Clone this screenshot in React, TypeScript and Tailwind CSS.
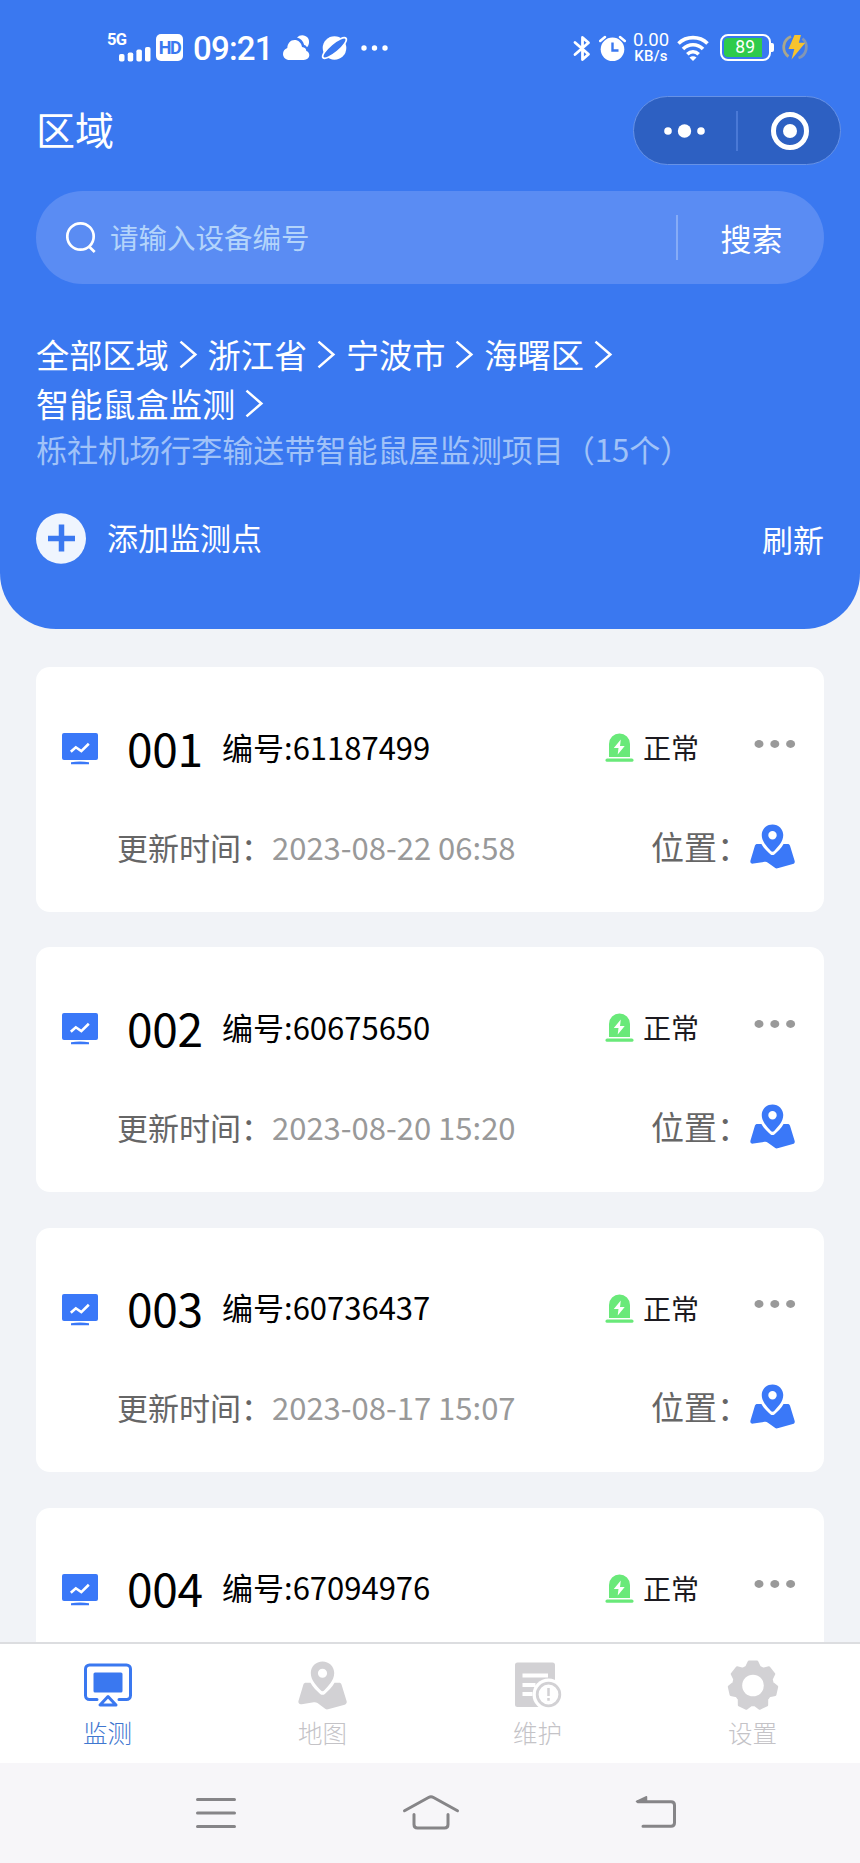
import React from "react";

type Device = { no: string; code: string; time?: string };

const devices: Device[] = [
  { no: "001", code: "61187499", time: "2023-08-22 06:58" },
  { no: "002", code: "60675650", time: "2023-08-20 15:20" },
  { no: "003", code: "60736437", time: "2023-08-17 15:07" },
  { no: "004", code: "67094976" },
];

const crumbs = ["全部区域", "浙江省", "宁波市", "海曙区", "智能鼠盒监测"];

function StatusBar() {
  return (
    <div className="flex h-[96px] items-start pl-[107px] pt-[33px] font-['Roboto',sans-serif]">
      <div className="relative h-[29px] w-[45px]">
        <span className="mt-[-2px] block text-[16.5px] font-bold leading-[17px] tracking-[-0.8px]">5G</span>
        <svg className="absolute left-[12px] top-[12px]" width="33" height="17" viewBox="0 0 33 17" fill="currentColor">
          <rect x="0" y="9" width="5.5" height="7.5" rx="1.8" />
          <rect x="8.7" y="7.5" width="5.5" height="9" rx="1.8" />
          <rect x="17.4" y="4.5" width="5.5" height="12" rx="1.8" />
          <rect x="26" y="2" width="5.5" height="14.5" rx="1.8" />
        </svg>
      </div>
      <div className="ml-[4px] mt-[1px] flex h-[27px] w-[27px] items-center justify-center rounded-[5px] bg-white text-[18px] font-bold leading-none tracking-[-1.5px] text-[#3a78f0]">
        HD
      </div>
      <span className="ml-[10px] mt-[-1px] w-[80px] text-[33px] font-medium leading-[33px] tracking-[-0.8px]">09:21</span>
      <svg className="ml-[10px] mt-[1px]" width="28" height="27" viewBox="0 0 28 27" fill="currentColor">
        <path d="M14 3.600C16.500.300 22 .3 24.800 3.700c2.200 3.300 1.300 7.600-.8 9.600-.6-1.400-1.600-2-2.800-2.300C20.200 7 17.500 4.500 14 3.600Z" />
        <path d="M6.500 26C2.800 26 0 23.400 0 20c0-2.800 1.700-5 4.300-5.900C4.500 9.300 7.500 6 11.500 6c3.800 0 6.900 2.700 7.500 7 3 .4 4.200 1.900 4.300 4 1.800.6 3 2 3 4.100 0 2.800-2.200 4.900-5.500 4.900Z" />
      </svg>
      <svg className="ml-[9px] mt-[1px]" width="30" height="28" viewBox="0 0 30 28">
        <circle cx="14.500" cy="14" r="11.800" fill="currentColor" />
        <ellipse cx="14.500" cy="14" rx="15" ry="4.500" transform="rotate(-40 14.500 14)" fill="#3a78f0" stroke="currentColor" strokeWidth="1.800" />
      </svg>
      <svg className="ml-[11px] mt-[12px]" width="28" height="6" viewBox="0 0 28 6" fill="currentColor">
        <circle cx="3" cy="3" r="2.700" />
        <circle cx="13.500" cy="3" r="2.700" />
        <circle cx="24" cy="3" r="2.700" />
      </svg>
      <div className="ml-[184px] flex items-start">
        <svg className="mt-[2px]" width="18" height="27" viewBox="0 0 18 27" fill="none" stroke="currentColor" strokeWidth="2.800" strokeLinejoin="round" strokeLinecap="round">
          <path d="M2 7.500 15.500 19.200 9.500 24.500V2.500l6 5.300L2 19.500" />
        </svg>
        <svg className="ml-[8px] mt-[2px]" width="27" height="27" viewBox="0 0 27 27">
          <circle cx="13.500" cy="14.300" r="11.800" fill="currentColor" />
          <path d="M1.200 6 6 2M25.800 6 21 2" stroke="currentColor" strokeWidth="2.500" strokeLinecap="round" />
          <path d="M13.500 7.500v8h6" fill="none" stroke="#3a78f0" strokeWidth="2.400" />
        </svg>
        <div className="ml-[6px] mt-[-2px] flex w-[38px] flex-col items-center">
          <span className="text-[18.500px] leading-[18px]">0.00</span>
          <span className="text-[15px] font-medium leading-[15px] tracking-[0.300px]">KB/s</span>
        </div>
        <svg className="ml-[7px] mt-[2px]" width="32" height="26" viewBox="0 0 32 26" fill="none" stroke="currentColor" strokeWidth="3.600">
          <path d="M1.500 8.500C9.500.7 22.500.7 30.500 8.500" />
          <path d="M6 14C11.700 8.300 20.300 8.300 26 14" />
          <path d="M10.300 19.200c3.300-3.200 8.100-3.200 11.400 0" />
          <path d="m12.500 22.500 3.500 3.400 3.500-3.400c-2-1.700-5-1.700-7 0Z" fill="currentColor" stroke="none" />
        </svg>
        <div className="ml-[11px] mt-[1px] flex items-center">
          <div className="flex h-[27px] w-[51px] rounded-[8px] border-2 border-white p-[2px]">
            <div className="flex h-full w-[38px] items-center justify-end rounded-l-[4px] bg-[#2fcb4b] pr-[7px] text-[17.500px] leading-none">
              89
            </div>
          </div>
          <div className="h-[9px] w-[3px] rounded-r-[2px] bg-white" />
        </div>
        <svg className="ml-[8px] mt-[1px]" width="27" height="27" viewBox="0 0 27 27">
          <path d="M9 2.500A11.500 11.500 0 0 0 6.500 22.500" fill="none" stroke="#aaa78c" strokeWidth="2.800" />
          <path d="M20.500 4.500a11.500 11.500 0 0 1-4 19.500" fill="none" stroke="#8296b4" strokeWidth="2.800" />
          <path d="M12.500 1h6.500l-2.200 7.800h6.500L9.500 25.500l2.800-10.500H6.500Z" fill="#f7c32e" />
        </svg>
      </div>
    </div>
  );
}

function TitleBar() {
  return (
    <div className="flex h-[70px] items-start justify-between pl-[36px] pr-[19px]">
      <h1 className="mt-[13px] text-[39px] leading-[39px]">区域</h1>
      <div className="flex h-[69px] w-[208px] items-center rounded-full border-[1.500px] border-[#6792e6] bg-[#2d60c2]">
        <svg className="ml-[28px]" width="44" height="14" viewBox="0 0 44 14" fill="currentColor">
          <circle cx="6" cy="7" r="3.800" />
          <circle cx="22.500" cy="7" r="6.700" />
          <circle cx="39" cy="7" r="3.800" />
        </svg>
        <div className="ml-[30px] h-[40px] w-[1.500px] bg-[#4a79d6]" />
        <svg className="ml-[32px]" width="40" height="40" viewBox="0 0 40 40" fill="none">
          <circle cx="20" cy="20" r="16.500" stroke="currentColor" strokeWidth="5" />
          <circle cx="20" cy="20" r="7" fill="currentColor" />
        </svg>
      </div>
    </div>
  );
}

function SearchBar() {
  return (
    <div className="mx-[36px] mt-[25px] flex h-[93px] items-center rounded-full bg-[#5a8cf3] pl-[30px]">
      <svg width="31" height="33" viewBox="0 0 31 33" fill="none" stroke="currentColor" strokeWidth="2.700">
        <circle cx="14.500" cy="15.500" r="13.200" />
        <path d="m23.500 26 5.200 5" />
      </svg>
      <span className="ml-[13px] text-[28.500px] leading-none text-[#b3d4fb]">请输入设备编号</span>
      <div className="ml-auto h-[45px] w-[2px] bg-[#86acf7]" />
      <button className="w-[146px] pb-[1px] pl-[1px] text-[31px] leading-none">搜索</button>
    </div>
  );
}

function Chevron() {
  return (
    <svg className="mx-[10px] mt-[1px]" width="18.800" height="29" viewBox="0 0 19 29" fill="none" stroke="currentColor" strokeWidth="2.600">
      <path d="M1.500 1.500 16.500 14.500 1.500 27.500" />
    </svg>
  );
}

function MapPin({ size }: { size: number }) {
  return (
    <svg width={size} height={size} viewBox="0 0 46 46" fill="currentColor">
      <path
        fillRule="evenodd"
        d="M23 .5c6.200 0 11 4.800 11 10.800 0 7.200-6 12.500-9.300 16.200-1 1.100-2.400 1.100-3.400 0C18 23.800 12 18.500 12 11.300 12 5.300 16.800.5 23 .5Zm0 6.700a4.300 4.300 0 1 0 0 8.600 4.300 4.300 0 0 0 0-8.600Z"
      />
      <path d="M7.500 20.500h4.200c2.300 4.500 6 7.500 9.100 10.400 1.400 1.200 3 1.200 4.400 0 3.100-2.900 6.800-5.900 9.100-10.400h4.200c1.200 0 2 .6 2.400 1.700l4.700 15.300c.5 1.700-.1 3-1.800 3.500l-15.600 4.300c-1 .3-1.900.1-2.700-.5l-7.200-5.300c-1.100-.8-2.200-1-3.500-.800L3.500 40.500C1.200 41-.1 39.500.5 37.300L5 22.200c.4-1.100 1.300-1.700 2.500-1.700Z" />
    </svg>
  );
}

function DeviceCard({ device }: { device: Device }) {
  return (
    <section className="flex h-[244.500px] shrink-0 flex-col rounded-[14px] bg-white">
      <div className="flex h-[162px] items-center pl-[26px]">
        <svg className="mt-[2px] shrink-0" width="36" height="32" viewBox="0 0 36 32">
          <rect width="36" height="27" rx="2" fill="#3a78f8" />
          <path d="M9 29.300q9-1.800 18 0v1.900H9Z" fill="#3a78f8" />
          <path d="m8.800 18.800 5-4.500 5.500 3.800 7.500-7.400" fill="none" stroke="#fff" strokeWidth="2.600" />
        </svg>
        <span className="mb-[3px] ml-[29px] w-[95px] text-[46px] leading-none tracking-[-0.300px] text-black">{device.no}</span>
        <span className="mb-[4px] text-[31px] leading-none text-black">编号:{device.code}</span>
        <div className="ml-auto flex items-center pr-[28px]">
          <svg width="29" height="30" viewBox="0 0 29 30">
            <path d="M4 24V11a10.500 10.500 0 0 1 21 0v13Z" fill="#69e979" />
            <rect x="0.500" y="25.500" width="28" height="3.300" rx="1.600" fill="#69e979" />
            <path d="M15.800 6.500 8.800 15h4.700l-.8 6.500 7-8.500H15Z" fill="#fff" />
          </svg>
          <span className="mb-[2px] ml-[9px] text-[28px] leading-none text-[#1c1a20]">正常</span>
          <svg className="mb-[9px] ml-[55px]" width="42" height="8" viewBox="0 0 42 8" fill="#999">
            <ellipse cx="5" cy="4" rx="4.500" ry="3.900" />
            <ellipse cx="20.800" cy="4" rx="4.500" ry="3.900" />
            <ellipse cx="36.600" cy="4" rx="4.500" ry="3.900" />
          </svg>
        </div>
      </div>
      {device.time && (
        <div className="mt-[-2px] flex h-[38px] items-center pl-[81px]">
          <span className="text-[31px] leading-none text-[#666]">更新时间：</span>
          <span className="text-[31px] leading-none text-[#999]">{device.time}</span>
          <span className="ml-auto text-[33px] leading-none text-[#666]">位置：</span>
          <span className="mr-[29px] text-[#3a78f8]">
            <MapPin size={45} />
          </span>
        </div>
      )}
    </section>
  );
}

function gearPath(cx: number, cy: number, teeth: number): string {
  const points: string[] = [];
  for (let i = 0; i < teeth; i++) {
    const base = (i * 2 * Math.PI) / teeth - Math.PI / 2;
    const corners: [number, number][] = [
      [-0.35, 19.5],
      [-0.17, 24],
      [0.17, 24],
      [0.35, 19.5],
    ];
    corners.forEach(([angle, r]) => {
      points.push(`${(cx + r * Math.cos(base + angle)).toFixed(2)} ${(cy + r * Math.sin(base + angle)).toFixed(2)}`);
    });
  }
  return `M${points.join("L")}Z`;
}

function MonitorIcon() {
  return (
    <svg width="48" height="44" viewBox="0 0 48 44" fill="none" stroke="currentColor" strokeWidth="3" strokeLinecap="round" strokeLinejoin="round">
      <path d="M13 36.500H5.500a4 4 0 0 1-4-4V6a4 4 0 0 1 4-4h37a4 4 0 0 1 4 4v26.500a4 4 0 0 1-4 4H35" />
      <rect x="9.500" y="9.500" width="29" height="20" rx="1.500" fill="currentColor" stroke="none" />
      <path d="m24 33.500-8 8.500h16Z" />
    </svg>
  );
}

function ReportIcon() {
  return (
    <svg width="48" height="46" viewBox="0 0 48 46">
      <path d="M3.500.5h35a2.500 2.500 0 0 1 2.500 2.500v42H3.500A2.500 2.500 0 0 1 1 42.500V3A2.500 2.500 0 0 1 3.500.5Z" fill="currentColor" />
      <path d="M8.500 13.500h25.500M8.500 23h13M8.500 32h10" stroke="#fff" strokeWidth="3.800" />
      <circle cx="34.500" cy="32.500" r="16" fill="#fff" />
      <circle cx="34.500" cy="32.500" r="11.300" fill="none" stroke="currentColor" strokeWidth="2.800" />
      <path d="M34.500 26v8M34.500 36v2.800" stroke="currentColor" strokeWidth="2.500" />
    </svg>
  );
}

function GearIcon() {
  return (
    <svg width="52" height="52" viewBox="0 0 52 52">
      <path d={gearPath(26, 26.5, 7)} fill="currentColor" stroke="currentColor" strokeWidth="2.500" strokeLinejoin="round" />
      <circle cx="26" cy="26.500" r="10.800" fill="#fff" />
    </svg>
  );
}

const tabs = [
  { label: "监测", icon: <MonitorIcon />, active: true },
  { label: "地图", icon: <MapPin size={49} />, active: false },
  { label: "维护", icon: <ReportIcon />, active: false },
  { label: "设置", icon: <GearIcon />, active: false },
];

export default function App() {
  return (
    <div className="flex h-[1863px] w-[860px] flex-col overflow-hidden bg-[#f1f3f7] font-['Noto_Sans_CJK_SC',sans-serif]">
      <header className="h-[629px] shrink-0 rounded-b-[56px] bg-[#3a78f0] text-white">
        <StatusBar />
        <TitleBar />
        <SearchBar />
        <nav className="mt-[45px] flex flex-wrap pl-[36px] pr-[150px] text-[33.200px] leading-[49px]">
          {crumbs.map((crumb) => (
            <span key={crumb} className="flex items-center whitespace-nowrap">
              {crumb}
              <Chevron />
            </span>
          ))}
        </nav>
        <p className="pl-[36px] text-[31.050px] leading-[44px] text-[#a0c2f8]">栎社机场行李输送带智能鼠屋监测项目（15个）</p>
        <div className="mt-[42px] flex items-center justify-between px-[36px] text-[31px] leading-none">
          <button className="flex items-center gap-[21px]">
            <svg width="50" height="51" viewBox="0 0 50 51">
              <ellipse cx="25" cy="25.500" rx="25" ry="25.300" fill="#eff5fe" />
              <path d="M12 25.500h27M25.500 11.500v27" stroke="#3a78f0" strokeWidth="5.500" />
            </svg>
            <span className="mb-[4px]">添加监测点</span>
          </button>
          <button>刷新</button>
        </div>
      </header>

      <main className="flex min-h-0 flex-1 flex-col gap-[35.800px] overflow-hidden px-[36px] pt-[38px]">
        {devices.map((device) => (
          <DeviceCard key={device.no} device={device} />
        ))}
      </main>

      <nav className="grid h-[121px] shrink-0 grid-cols-4 border-t-2 border-[#dcdde0] bg-white">
        {tabs.map((tab) => (
          <div key={tab.label} className={tab.active ? "flex flex-col items-center text-[#3a78f0]" : "flex flex-col items-center text-[#d2d1d4]"}>
            <div className="mt-[14px] flex h-[54px] items-center">{tab.icon}</div>
            <span className={tab.active ? "mt-[9px] text-[24.500px] font-light leading-[24px] text-[#3f77d0]" : "mt-[9px] text-[24.500px] font-light leading-[24px] text-[#c4c3c7]"}>{tab.label}</span>
          </div>
        ))}
      </nav>

      <footer className="flex h-[100px] shrink-0 items-start bg-[#f7f6f9] pl-[195px] pt-[31px] text-[#868588]">
        <svg width="42" height="38" viewBox="0 0 42 38" stroke="currentColor" strokeWidth="3" strokeLinecap="round">
          <path d="M2.500 5.500h37M2.500 19h37M2.500 32.500h37" />
        </svg>
        <svg className="ml-[165px]" width="58" height="38" viewBox="0 0 58 38" fill="none" stroke="currentColor" strokeWidth="3" strokeLinecap="round" strokeLinejoin="round">
          <path d="M2.500 16.800 26.500 3.500q2.500-1.300 5 0L55.500 16.800" />
          <path d="M12 20.500v10q0 3.500 3.500 3.500h27q3.500 0 3.500-3.500v-10" />
        </svg>
        <svg className="ml-[175px]" width="43" height="38" viewBox="0 0 43 38" fill="none" stroke="currentColor" strokeWidth="3" strokeLinecap="round" strokeLinejoin="round">
          <path d="M3 7.700h33q3.500 0 3.500 3.500v17.600q0 3.500-3.500 3.500H8" />
          <path d="M1.500 7.500 11.500 2.800v4.700Z" fill="currentColor" strokeWidth="1.500" />
        </svg>
      </footer>
    </div>
  );
}
